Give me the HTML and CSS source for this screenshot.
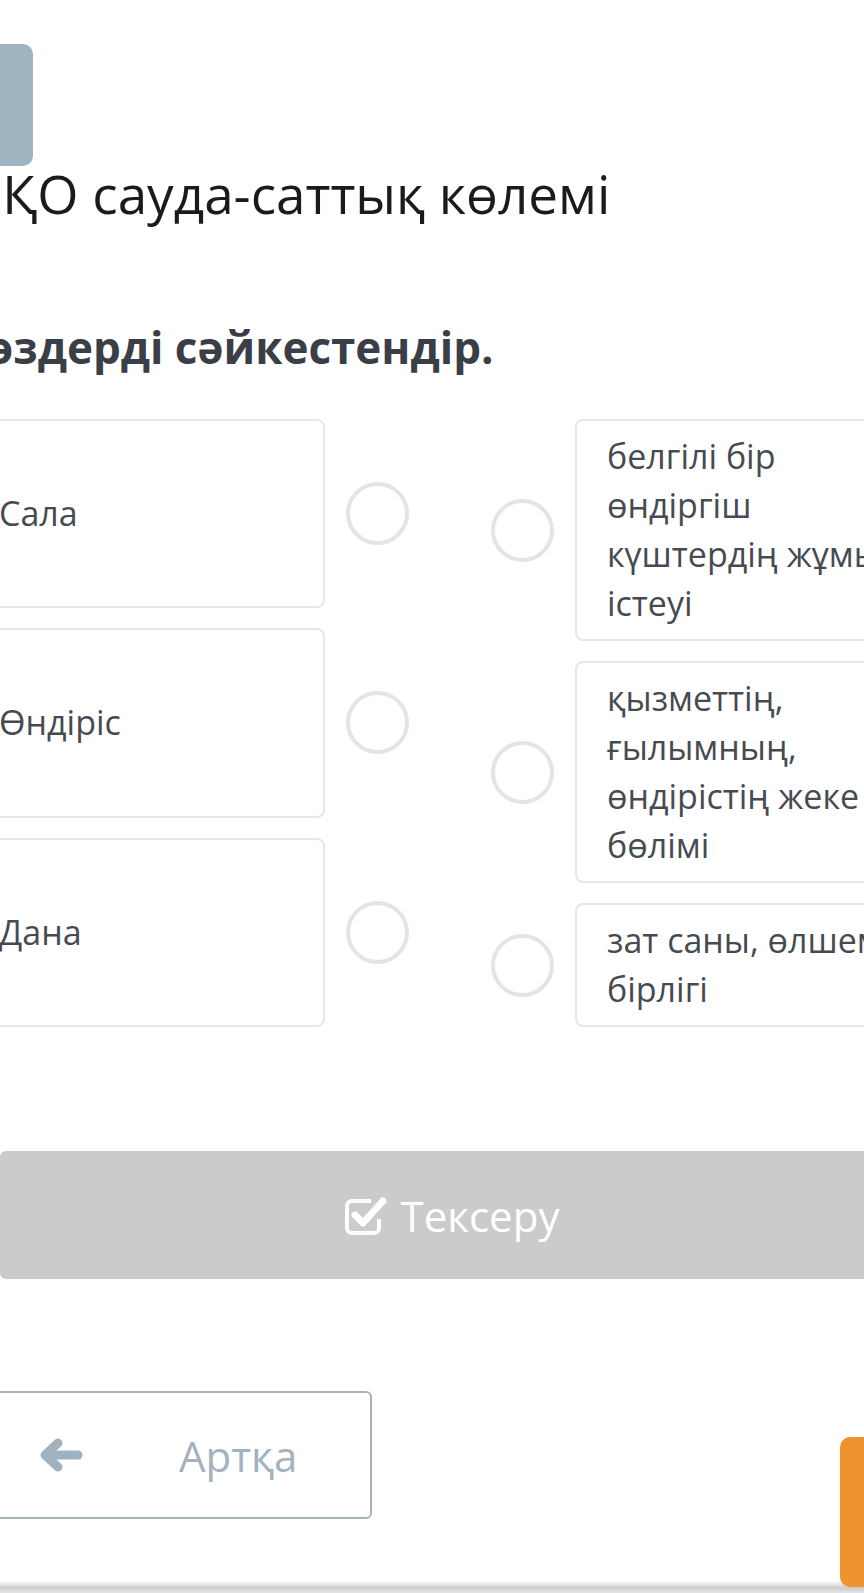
FILE: index.html
```html
<!DOCTYPE html>
<html lang="kk">
<head>
    <meta charset="UTF-8">
    <meta name="viewport" content="width=device-width, initial-scale=1.0">
    <title>ОҚО сауда-саттық көлемі</title>
    <link rel="stylesheet" href="styles.css">
</head>
<body>
    <div class="page">
        <div class="badge"></div>
        <h1 class="title">ОҚО сауда-саттық көлемі</h1>
        <h2 class="task">Сөздерді сәйкестендір.</h2>

        <div class="match"> <!-- left words and right definitions -->
            <div class="side side-left">
                <div class="row">
                    <div class="card">Сала</div>
                    <span class="dot"></span>
                </div>
                <div class="row">
                    <div class="card">Өндіріс</div>
                    <span class="dot"></span>
                </div>
                <div class="row">
                    <div class="card">Дана</div>
                    <span class="dot"></span>
                </div>
            </div>
            <div class="side side-right">
                <div class="row">
                    <span class="dot"></span>
                    <div class="card">белгілі бір өндіргіш күштердің жұмыс істеуі</div>
                </div>
                <div class="row">
                    <span class="dot"></span>
                    <div class="card">қызметтің, ғылымның, өндірістің жеке бөлімі</div>
                </div>
                <div class="row">
                    <span class="dot"></span>
                    <div class="card">зат саны, өлшем бірлігі</div>
                </div>
            </div>
        </div>

        <button type="button" class="btn-check">
            <svg width="48" height="48" viewBox="0 0 48 48" fill="none" stroke="#fff">
                <path d="M38 28v9a5 5 0 0 1-5 5H11a5 5 0 0 1-5-5V15a5 5 0 0 1 5-5h19" stroke-width="4"/>
                <polyline points="14 24 22 32 42 10" stroke-width="7" stroke-linecap="round" stroke-linejoin="round"/>
            </svg>
            <span>Тексеру</span>
        </button>

        <div class="nav">
            <button type="button" class="btn-back">
                <svg width="44" height="36" viewBox="0 0 44 36" fill="none" stroke="#a0b2c0" stroke-width="9" stroke-linecap="round" stroke-linejoin="round">
                    <line x1="10" y1="18" x2="39" y2="18"/>
                    <polyline points="19 6 6 18 19 30"/>
                </svg>
                <span>Артқа</span>
            </button>
            <button type="button" class="btn-next"></button>
        </div>
    </div>
    <div class="footer-shadow"></div>
</body>
</html>
```

FILE: styles.css
```css
body, html {
    margin: 0;
    height: 1593px;
    overflow: hidden;
    background: #fff;
    font-family: "Open Sans", "Liberation Sans", sans-serif;
}

.page {
    width: 966px;
    margin-left: -33px;
}

.badge {
    width: 66px;
    height: 122px;
    margin-top: 44px;
    background-color: #9fb3c1;
    border-radius: 10px;
}

.title {
    margin: 0 0 0 -6px;
    font-size: 53px;
    font-weight: 400;
    line-height: 56px;
    color: #1b1b1b;
    white-space: nowrap;
}

.task {
    margin: 100px 0 0 -9px;
    font-size: 44px;
    font-weight: 700;
    line-height: 50px;
    color: #3a3f47;
    white-space: nowrap;
}

.match {
    display: flex;
    gap: 82px;
    margin-top: 47px;
}

.side {
    width: 442px;
    display: flex;
    flex-direction: column;
    gap: 20px;
}

.row {
    display: flex;
    align-items: center;
    gap: 21px;
}

.side-left .row {
    flex: 1;
    align-items: stretch;
}

.side-left .dot {
    align-self: center;
}

.card {
    width: 358px;
    flex: none;
    box-sizing: border-box;
    border: 2px solid #e5e8eb;
    border-radius: 8px;
    padding: 11px 20px 11px 30px;
    font-size: 34px;
    line-height: 49px;
    color: #464b51;
}

.side-left .card {
    display: flex;
    align-items: center;
}

.dot {
    flex: none;
    width: 63px;
    height: 63px;
    box-sizing: border-box;
    border: 4px solid #e1e4e8;
    border-radius: 50%;
    background: #fff;
}

.btn-check {
    display: flex;
    align-items: center;
    justify-content: center;
    gap: 12px;
    width: 900px;
    height: 128px;
    margin: 124px 0 0 33px;
    border: none;
    border-radius: 6px;
    background-color: #cbcbcb;
    color: #fff;
    font-family: inherit;
    font-size: 42px;
    padding: 0;
}

.nav {
    display: flex;
    align-items: flex-start;
    margin-top: 112px;
}

.btn-back {
    flex: none;
    display: flex;
    align-items: center;
    box-sizing: border-box;
    width: 405px;
    height: 128px;
    padding: 0 0 0 70px;
    border: 2px solid #a5b3bf;
    border-radius: 6px;
    background: #fff;
    color: #a3b2be;
    font-family: inherit;
    font-size: 42px;
}

.btn-back span {
    margin-left: 96px;
}

.btn-next {
    flex: none;
    position: relative;
    z-index: 1;
    width: 120px;
    height: 150px;
    margin: 46px 0 0 468px;
    border: none;
    border-radius: 10px;
    background-color: #f0922e;
}

.footer-shadow {
    position: fixed;
    left: 0;
    right: 0;
    bottom: 0;
    height: 12px;
    background: linear-gradient(to bottom, rgba(220, 220, 220, 0), #cdcdcd 55%, #e4e4e4);
}
```
